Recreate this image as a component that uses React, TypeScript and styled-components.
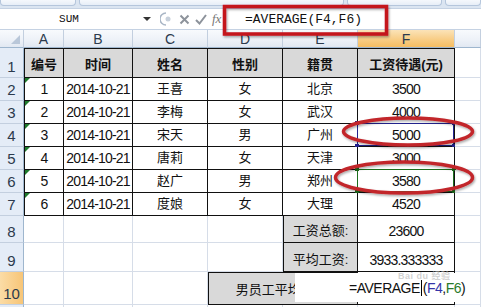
import styled, { createGlobalStyle, css } from 'styled-components';

const GlobalStyle = createGlobalStyle`
  html, body { margin: 0; padding: 0; background: #fff; }
  body { font-family: "Liberation Sans", "Noto Sans CJK SC", sans-serif; }
  #root { width: 481px; height: 307px; overflow: hidden; }
`;

const people = [
  ['1', '2014-10-21', '王喜', '女', '北京', '3500'],
  ['2', '2014-10-21', '李梅', '女', '武汉', '4000'],
  ['3', '2014-10-21', '宋天', '男', '广州', '5000'],
  ['4', '2014-10-21', '唐莉', '女', '天津', '3000'],
  ['5', '2014-10-21', '赵广', '男', '郑州', '3580'],
  ['6', '2014-10-21', '度娘', '女', '大理', '4520'],
];

const headers = ['编号', '时间', '姓名', '性别', '籍贯', '工资待遇(元)'];
const letters = ['A', 'B', 'C', 'D', 'E', 'F', ''];

const Page = styled.div`
  position: relative;
  width: 481px;
  height: 307px;
  overflow: hidden;
  background: #fff;
`;

const Ribbon = styled.div`
  display: flex;
  gap: 3px;
  height: 8px;
  background: #dbe5f1;
`;

const RibbonTab = styled.div<{ $w: number }>`
  flex: ${(p) => (p.$w ? `0 0 ${p.$w}px` : '1')};
  height: 5px;
  background: linear-gradient(#f5f8fc, #e7eef7);
  border: 1px solid #b5c6dc;
  border-top: none;
  border-radius: 0 0 4px 4px;
`;

const FormulaBar = styled.div`
  display: flex;
  align-items: stretch;
  height: 22px;
  background: #fff;
  border-top: 1px solid #c5d2e3;
  border-bottom: 1px solid #c5d2e3;
  box-sizing: border-box;
`;

const NameBox = styled.div`
  position: relative;
  width: 158px;
  display: flex;
  align-items: center;
  justify-content: center;
  padding-right: 20px;
  box-sizing: border-box;
  font-family: "Liberation Mono", monospace;
  font-size: 11px;
  color: #111;
`;

const DropArrow = styled.span`
  position: absolute;
  right: 7px;
  top: 8px;
  border-left: 4px solid transparent;
  border-right: 4px solid transparent;
  border-top: 4px solid #333;
`;

const Tools = styled.div`
  display: flex;
  align-items: center;
  gap: 5px;
  width: 66px;
  padding-left: 2px;
  box-sizing: border-box;
  color: #8a8f96;
`;

const Fx = styled.span`
  font-family: "Liberation Serif", serif;
  font-style: italic;
  font-size: 13px;
  color: #777;
`;

const FormulaInput = styled.div`
  flex: 1;
  display: flex;
  align-items: center;
  padding-left: 20px;
  border-left: 1px solid #b9c7d9;
  font-family: "Liberation Mono", monospace;
  font-size: 13px;
  color: #111;
`;

const Sheet = styled.div`
  display: grid;
  grid-template-columns: 24px 40px 69px 75px 75px 75px 97px 26px;
  grid-template-rows: 18px 30px repeat(6, 23px) 27px 29px 33px 10px;
`;

const ColHead = styled.div<{ $active?: boolean }>`
  display: flex;
  align-items: center;
  justify-content: center;
  box-sizing: border-box;
  font-size: 14px;
  color: #2c3a4d;
  border-right: 1px solid #c3cfdf;
  border-bottom: 1px solid #9eb6ce;
  background: ${(p) =>
    p.$active
      ? 'linear-gradient(#fbe3b8, #f8cd86 55%, #f5bd62)'
      : 'linear-gradient(#f8fafd, #eef2f8 55%, #e1e8f2)'};
`;

const Corner = styled(ColHead)`
  position: relative;
  &::after {
    content: '';
    position: absolute;
    right: 3px;
    bottom: 3px;
    border-left: 9px solid transparent;
    border-bottom: 9px solid #b9c7d9;
  }
`;

const RowHead = styled.div<{ $active?: boolean }>`
  display: flex;
  align-items: flex-end;
  justify-content: center;
  padding-bottom: 2px;
  box-sizing: border-box;
  font-size: 15px;
  color: #2c3a4d;
  border-right: 1px solid #9eb6ce;
  border-bottom: 1px solid #c3cfdf;
  background: ${(p) => (p.$active ? 'linear-gradient(90deg, #fbdca6, #f7c577)' : '#e4ecf7')};
`;

const Cell = styled.div<{
  $boxed?: boolean;
  $top?: boolean;
  $left?: boolean;
  $fill?: boolean;
  $head?: boolean;
  $middle?: boolean;
  $flag?: boolean;
  $num?: boolean;
  $span?: number;
}>`
  position: relative;
  display: flex;
  align-items: ${(p) => (p.$head || p.$middle ? 'center' : 'flex-end')};
  justify-content: center;
  padding-bottom: ${(p) => (p.$head || p.$middle ? '0' : '3px')};
  box-sizing: border-box;
  white-space: nowrap;
  overflow: visible;
  font-size: ${(p) => (p.$num ? '14px' : '13px')};
  letter-spacing: ${(p) => (p.$num ? '-0.8px' : '0')};
  font-weight: ${(p) => (p.$head ? 700 : 400)};
  color: #111;
  background: ${(p) => (p.$fill ? '#d9d9d9' : '#fff')};
  border-right: 1px solid ${(p) => (p.$boxed ? '#111' : '#d6dde8')};
  border-bottom: 1px solid ${(p) => (p.$boxed ? '#111' : '#d6dde8')};
  ${(p) => p.$top && 'border-top: 1px solid #111;'}
  ${(p) => p.$left && 'border-left: 1px solid #111;'}
  ${(p) => p.$span && `grid-column: span ${p.$span};`}
  ${(p) =>
    p.$flag &&
    css`
      &::before {
        content: '';
        position: absolute;
        left: 0;
        top: 0;
        border-top: 5px solid #1f7a2c;
        border-right: 5px solid transparent;
      }
    `}
`;

const Selection = styled.div<{ $color: string }>`
  position: absolute;
  inset: -1px 0 0 -1px;
  border: 1px solid ${(p) => p.$color};
  pointer-events: none;
`;

const Handle = styled.span<{ $color: string; $x: 'left' | 'right'; $y: 'top' | 'bottom' }>`
  position: absolute;
  width: 4px;
  height: 4px;
  background: ${(p) => p.$color};
  ${(p) => p.$x}: -3px;
  ${(p) => p.$y}: -3px;
`;

const EditBox = styled.div`
  position: absolute;
  left: 295px;
  top: 273px;
  width: 177px;
  height: 29px;
  display: flex;
  align-items: center;
  padding-left: 54px;
  box-sizing: border-box;
  background: #fff;
  font-size: 14px;
  letter-spacing: -0.5px;
  color: #111;
`;

const Ref = styled.span<{ $color: string }>`
  color: ${(p) => p.$color};
`;

const Caret = styled.span`
  display: inline-block;
  width: 1px;
  height: 16px;
  margin: 0 1px;
  background: #000;
`;

const Watermark = styled.div`
  position: absolute;
  left: 398px;
  top: 272px;
  font-size: 9px;
  line-height: 9px;
  font-weight: 700;
  color: rgba(180, 180, 180, 0.6);
  letter-spacing: 0.5px;
  pointer-events: none;
`;

const Marks = styled.svg`
  position: absolute;
  left: 0;
  top: 0;
  pointer-events: none;
`;

const SelectBox = ({ color }: { color: string }) => (
  <Selection $color={color}>
    <Handle $color={color} $x="left" $y="top" />
    <Handle $color={color} $x="right" $y="top" />
    <Handle $color={color} $x="left" $y="bottom" />
    <Handle $color={color} $x="right" $y="bottom" />
  </Selection>
);

const App = () => {
  return (
    <Page>
      <GlobalStyle />
      <Ribbon>
        <RibbonTab $w={74} />
        <RibbonTab $w={263} />
        <RibbonTab $w={93} />
        <RibbonTab $w={0} />
      </Ribbon>
      <FormulaBar>
        <NameBox>
          SUM
          <DropArrow />
        </NameBox>
        <Tools>
          <svg width="14" height="14" viewBox="0 0 14 14">
            <path d="M6 1 A6 6 0 0 0 6 13" fill="none" stroke="#a9b6c6" strokeWidth="1.5" />
            <circle cx="8" cy="7" r="2.5" fill="#c7d0db" />
          </svg>
          <svg width="11" height="11" viewBox="0 0 11 11">
            <path d="M1.5 1.5 L9.5 9.5 M9.5 1.5 L1.5 9.5" stroke="#8d939b" strokeWidth="2" />
          </svg>
          <svg width="12" height="11" viewBox="0 0 12 11">
            <path d="M1 6 L4.5 9.5 L11 1" fill="none" stroke="#8d939b" strokeWidth="2" />
          </svg>
          <Fx>fx</Fx>
        </Tools>
        <FormulaInput>=AVERAGE(F4,F6)</FormulaInput>
      </FormulaBar>

      <Sheet>
        <Corner />
        {letters.map((l) => (
          <ColHead key={l || 'G'} $active={l === 'F'}>
            {l}
          </ColHead>
        ))}

        <RowHead>1</RowHead>
        {headers.map((h, i) => (
          <Cell key={h} $head $fill $boxed $top $left={i === 0}>
            {h}
          </Cell>
        ))}
        <Cell />

        {people.map((row, r) => (
          <>
            <RowHead key={`h${r}`}>{r + 2}</RowHead>
            {row.map((v, c) => (
              <Cell
                key={`${r}-${c}`}
                $boxed
                $left={c === 0}
                $flag={c === 0}
                $num={c === 0 || c === 1 || c === 5}
              >
                {v}
                {r === 2 && c === 5 && <SelectBox color="#23238f" />}
                {r === 4 && c === 5 && <SelectBox color="#1d6e1d" />}
              </Cell>
            ))}
            <Cell key={`g${r}`} />
          </>
        ))}

        <RowHead>8</RowHead>
        <Cell />
        <Cell />
        <Cell />
        <Cell />
        <Cell $boxed $fill $left>
          工资总额:
        </Cell>
        <Cell $boxed $num>
          23600
        </Cell>
        <Cell />

        <RowHead>9</RowHead>
        <Cell />
        <Cell />
        <Cell />
        <Cell />
        <Cell $boxed $fill $left>
          平均工资:
        </Cell>
        <Cell $boxed $num>
          3933.333333
        </Cell>
        <Cell />

        <RowHead $active>10</RowHead>
        <Cell />
        <Cell />
        <Cell />
        <Cell $span={2} $boxed $fill $left $top $middle>
          男员工平均工资:
        </Cell>
        <Cell $boxed />
        <Cell />

        <RowHead />
        <Cell />
        <Cell />
        <Cell />
        <Cell />
        <Cell />
        <Cell />
        <Cell />
      </Sheet>

      <EditBox>
        =AVERAGE
        <Caret />
        (<Ref $color="#3535a8">F4</Ref>,<Ref $color="#2a7a2a">F6</Ref>)
      </EditBox>
      <Watermark>Bai du 经验</Watermark>

      <Marks width="481" height="307" viewBox="0 0 481 307">
        <defs>
          <filter id="sh" x="-20%" y="-50%" width="140%" height="200%">
            <feDropShadow dx="1" dy="1.5" stdDeviation="1.2" floodColor="#000" floodOpacity="0.35" />
          </filter>
        </defs>
        <rect x="224.5" y="6.5" width="162" height="27.5" fill="none" stroke="#c4161c" strokeWidth="3.5" filter="url(#sh)" />
        <ellipse cx="408" cy="131.5" rx="64.5" ry="13.5" fill="none" stroke="#c2262c" strokeWidth="3.5" filter="url(#sh)" />
        <ellipse cx="404" cy="177.5" rx="68.5" ry="15.5" fill="none" stroke="#c2262c" strokeWidth="3.5" filter="url(#sh)" />
      </Marks>
    </Page>
  );
};

export default App;
